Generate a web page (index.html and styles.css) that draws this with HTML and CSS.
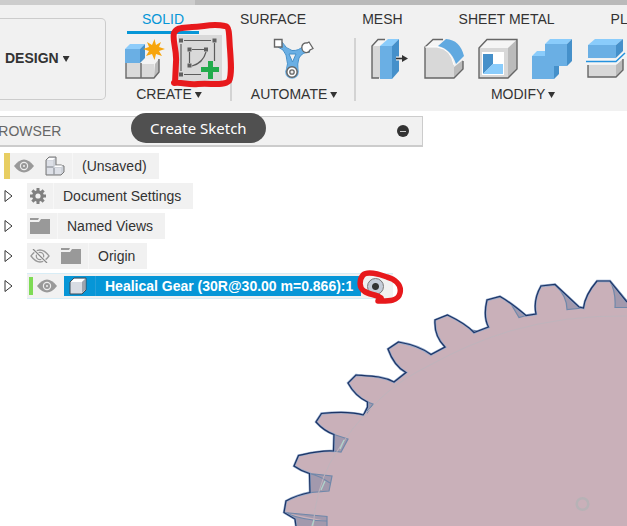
FILE: index.html
```html
<!DOCTYPE html>
<html lang="en">
<head>
<meta charset="utf-8">
<title>Design workspace</title>
<link rel="stylesheet" href="styles.css">
</head>
<body>
<div class="titlebar"><div class="titlebar-tab"></div></div>
<header class="toolbar">
  <button class="workspace" type="button">DESIGN <span class="caret"></span></button>
  <div class="ribbon">
    <nav class="tabs">
      <a class="tab active" href="#solid">SOLID</a>
      <a class="tab" href="#surface">SURFACE</a>
      <a class="tab" href="#mesh">MESH</a>
      <a class="tab" href="#sheet">SHEET METAL</a>
      <a class="tab" href="#plastic">PLASTIC</a>
    </nav>
    <div class="groups">
      <section class="group create">
        <div class="tools">
          <button class="tool" type="button" aria-label="New component">
            <svg width="41" height="42" viewBox="0 0 41 42">
              <path d="M1 25H16V40H1Z M16 25H29V40H16Z" fill="#dadada"/>
              <path d="M16 25L21 21H34L30 26H16Z" fill="#f4f4f4"/>
              <path d="M30 26L34 21V33L29 40Z" fill="#bbb"/>
              <path d="M1 25V40H29L34 34V21M16 25V40" fill="none" stroke="#696969" stroke-width="1.4"/>
              <path d="M0 11L5 6H20L15 11Z" fill="#8dccfa"/><path d="M0 11H15V25H0Z" fill="#6aafe4"/><path d="M15 11L20 6V20L15 25Z" fill="#4590ca"/>
              <path d="M29.500 1L31 7L36 4L34 9L40 11L34 13L37 18L31 16L29.500 22L27 16L21 18L24 13L18 11L24 9L22 4L27 7Z" fill="#f7a50c"/>
            </svg>
          </button>
          <div class="sketch-wrap">
            <button class="tool sketch" type="button" aria-label="Create Sketch">
              <svg width="44" height="46" viewBox="178 35 44 46">
                <g fill="none" stroke="#5c5c5c" stroke-width="1.2"><path d="M184 40.500H211M181 44V71M184 74.500H201M214.500 43V61M192 49.500H204M189.500 52V63M206 52Q203 63 192 66"/></g>
                <path d="M179 38.500h4v4h-4zM212.500 38.500h4v4h-4zM179 72.500h4v4h-4zM187.500 47.500h4v4h-4zM204 47.500h4v4h-4zM187.500 63.500h4v4h-4z" fill="#606060"/>
                <path d="M208 61h5v6h6v5h-6v7h-5v-7h-7v-5h7z" fill="#21ab4b"/>
              </svg>
            </button>
            <svg class="mark-sketch" width="66" height="70" viewBox="170 20 66 70">
              <path d="M174 83C183 82 187 85 198 84C211 83 224 86 229 81C232 75 231 62 230 49C229 39 230 26 225 26C211 23 204 27 192 27C182 28 177 27 174 33C172 40 177 50 176 62L175 83" fill="none" stroke="#e7191c" stroke-width="6" stroke-linejoin="round" stroke-linecap="round"/>
            </svg>
            <div class="tooltip" role="tooltip">Create Sketch</div>
          </div>
        </div>
        <button class="group-label" type="button">CREATE <span class="caret"></span></button>
      </section>
      <section class="group automate">
        <div class="tools">
          <button class="tool" type="button" aria-label="Automated modeling">
            <svg width="42" height="42" viewBox="272 38 42 42">
              <path d="M282 42Q286 49 292 50.500Q299 51 303 46L310 52Q302 52 299 58Q297 63 298 72H286Q289 64 286 55Q284 49 278 47Z" fill="#6aafe4" stroke="#4590ca"/>
              <path d="M289 54H296L292.500 62Z" fill="#f1f1f1" stroke="#4590ca"/>
              <circle cx="292" cy="72" r="6.800" fill="#6aafe4"/>
              <path d="M274.500 39.500H282V47H274.500Z" fill="#fff" stroke="#666" stroke-width="1.400"/>
              <path d="M302 46Q303 42.500 307 43L309 42L313 48.500L310 50Q309 53 305.500 52.500Q301 51 302 46Z" fill="#fff" stroke="#666" stroke-width="1.300"/>
              <circle cx="292" cy="72" r="5.200" fill="#fff" stroke="#666" stroke-width="1.500"/><circle cx="292" cy="72" r="2.200" fill="#eee" stroke="#666" stroke-width="1.300"/>
            </svg>
          </button>
        </div>
        <button class="group-label" type="button">AUTOMATE <span class="caret"></span></button>
      </section>
      <section class="group modify">
        <div class="tools">
          <button class="tool" type="button" aria-label="Press pull">
            <svg width="41" height="42" viewBox="370 38 41 42">
              <path d="M372 46H380V78H372Z" fill="#d8d8d8"/><path d="M372 46L378 40H386L379 46Z" fill="#f5f5f5"/><path d="M379 78H372V46L378 39.500H385" fill="none" stroke="#666" stroke-width="1.400"/>
              <path d="M380 46L388 39H399L392 46Z" fill="#8accfb"/><path d="M380 46H392V79H380Z" fill="#6aafe4"/><path d="M392 46L399 39V71L392 79Z" fill="#4590ca"/>
              <path d="M396 58.500H403" stroke="#f1f1f1" stroke-width="4"/><path d="M396 58.500H404" stroke="#333" stroke-width="1.600"/><path d="M402 55L408 58.500L402 62Z" fill="#333"/>
            </svg>
          </button>
          <button class="tool" type="button" aria-label="Fillet">
            <svg width="41" height="42" viewBox="424 38 41 42">
              <path d="M425 47L433 39.500H443L438 47Z" fill="#f5f5f5"/><path d="M425 47H437Q451 49 454 65V78H425Z" fill="#d8d8d8"/><path d="M454 67L463 60V69L454 78Z" fill="#bbb"/>
              <path d="M443 39.500H433L425 47V78H454L463 69V61" fill="none" stroke="#666" stroke-width="1.400"/><path d="M425 47H437Q451 49 454 65" fill="none" stroke="#fff"/>
              <path d="M438 46L446 39Q460 40 464 56L456 64Q451 49 438 46Z" fill="#60a9e0"/>
            </svg>
          </button>
          <button class="tool" type="button" aria-label="Shell">
            <svg width="41" height="42" viewBox="478 38 41 42">
              <path d="M479 48L487 39.500H517L508 48Z" fill="#f5f5f5"/><path d="M479 48H508V78H479Z" fill="#d8d8d8"/><path d="M508 48L517 39.500V69L508 78Z" fill="#bbb"/><path d="M479 48L487 39.500H517V69L508 78H479Z" fill="none" stroke="#666" stroke-width="1.400"/>
              <path d="M482 52H504V75H482Z" fill="#fff"/><path d="M483 54H493V64L483 74Z" fill="#4590ca"/><path d="M493 64H503V74H483Z" fill="#8accfb"/>
            </svg>
          </button>
          <button class="tool" type="button" aria-label="Combine">
            <svg width="41" height="42" viewBox="532 38 41 42">
              <path d="M532 56L537 51H545V44L550 39H572L567 44V66H554V79H532Z" fill="#8accfb"/><path d="M532 56H545V44H567V66H554V79H532Z" fill="#6aafe4"/><path d="M567 44L572 39V61L567 66ZM554 66H559V74L554 79Z" fill="#4590ca"/>
            </svg>
          </button>
          <button class="tool" type="button" aria-label="Split body">
            <svg width="41" height="42" viewBox="586 38 41 42">
              <path d="M588 45L595 39H623L616 45Z" fill="#8accfb"/><path d="M588 45H616V58H588Z" fill="#6aafe4"/><path d="M616 45L623 39V51L616 58Z" fill="#4590ca"/>
              <path d="M588 65H616V77H588Z" fill="#d8d8d8"/><path d="M616 65L623 59V70L616 77Z" fill="#bbb"/><path d="M588 65V77H616L623 70V59" fill="none" stroke="#666" stroke-width="1.400"/>
              <path d="M585 61.500H616L625 53" fill="none" stroke="#f5f5f5" stroke-width="5"/><path d="M585 61.500H616L625 53" fill="none" stroke="#2492df" stroke-width="1.500"/>
            </svg>
          </button>
        </div>
        <button class="group-label" type="button">MODIFY <span class="caret"></span></button>
      </section>
    </div>
  </div>
</header>
<main class="workspace-area">
  <svg class="gear" width="346" height="248" viewBox="281 278 346 248" aria-hidden="true">
    <defs>
      <path id="outline" d="M627 302L610 281H597Q585 295 583.500 308L579 307L555 284.500L541 286Q533 300 536 314L526 315.500C517 308 510 302 500 296.500L487 300Q483 317 488.500 327L474 332.500C467 325 458 320 447.500 315L435 320Q434 336 445 347L431 354.500C421 347 410 344 398.500 342L388 349Q394 366 406 372.500L394 382C383 376 370 376 356 375L348 383Q355 396 367.500 402V407L363.500 415C350 411 336 412 321.500 413.500L316 422Q324 431 334 434.500L333.500 451C321 450 310 453 298.500 455.500L294 466Q301 471 309.500 473.500L310 492.500Q297 495 286 501L284 512.500L295 519L296 526"/>
    </defs>
    <path d="M627 302L610 281H597Q585 295 583.500 308L579 307L555 284.500L541 286Q533 300 536 314L526 315.500C517 308 510 302 500 296.500L487 300Q483 317 488.500 327L474 332.500C467 325 458 320 447.500 315L435 320Q434 336 445 347L431 354.500C421 347 410 344 398.500 342L388 349Q394 366 406 372.500L394 382C383 376 370 376 356 375L348 383Q355 396 367.500 402V407L363.500 415C350 411 336 412 321.500 413.500L316 422Q324 431 334 434.500L333.500 451C321 450 310 453 298.500 455.500L294 466Q301 471 309.500 473.500L310 492.500Q297 495 286 501L284 512.500L295 519L296 526H627Z" fill="#c9b0b9"/>
    <g fill="#a299ad" stroke="#7088aa" stroke-width="1.200">
      <path d="M610 281Q616 292 615 307.500H628V302Z"/><path d="M555 284.500Q567 296 567 309.500L583 308L579 307Z"/><path d="M511 304L519 317.500L526 315.500ZM471 330L474 332.500L478 331Z"/>
      <path d="M367.500 402L373 404L367.500 412Z"/><path d="M334 434.500L348 439L341 452L333.500 451Z"/><path d="M309.500 473.500L332 476L329 491L310 492.500ZM309.500 473.500Q320 476 330 483"/><path d="M284 512.500L327 516.500V527H296L295 519ZM284 512.500Q305 521 327 521"/>
    </g>
    <use href="#outline" class="outline-halo"/>
    <use href="#outline" class="outline-core"/>
    <path d="M627 316Q565 315 510 331Q470 343 430 365Q400 380 382 397Q350 427 330 463Q316 490 313 526" fill="none" stroke="#bfb4bc" stroke-width="1"/>
    <path d="M344 440L340 449M325 481L321 490M314 520L312 526" stroke="#b0d5cc" stroke-width="1.300"/>
    <circle cx="582.500" cy="504" r="5.800" fill="none" stroke="#b7b2b6" stroke-width="2.500"/>
  </svg>
  <aside class="browser">
    <div class="browser-head"><h2>BROWSER</h2>
      <button class="collapse" type="button" aria-label="Collapse"></button>
    </div>
    <ul class="tree">
      <li class="root"><div class="chip">
        <span class="bar yellow"></span>
        <svg class="eye" width="20" height="14" viewBox="0 0 20 14"><path d="M0 7Q10-6 20 7Q10 20 0 7Z" fill="#999"/><circle cx="10" cy="7" r="4.200" fill="#eee"/><circle cx="10" cy="7" r="3" fill="#999"/><circle cx="10" cy="7" r="1" fill="#eee"/></svg>
        <svg class="assembly" width="20" height="20" viewBox="0 0 20 20"><path d="M1 4L4 1H11V9H16L19 10V16L16 19H1Z" fill="#cdd1d8" stroke="#777" stroke-width="1"/><path d="M2 4.500H8V10H2ZM2 12H8V18H2ZM10 12H16V18H10Z" fill="#dde0e7"/><path d="M1.500 11H8.500M9 12V18.500" fill="none" stroke="#8b8f96"/><path d="M2 4L4 2H10L8 4ZM9 11L11 9.500H18L16 11Z" fill="#fff"/></svg>
        <span class="divider"></span>
        <span class="name">(Unsaved)</span></div></li>
      <li><button class="twisty" type="button" aria-label="Expand Document Settings"><svg width="9" height="14" viewBox="0 0 9 14"><path d="M1 1.500V12.500L8 7Z" fill="#fff" stroke="#333"/></svg></button><div class="chip">
        <svg width="16" height="16" viewBox="-8 -8 16 16"><g fill="#808080"><path id="cog" d="M-1.500-8H1.500V8H-1.500ZM-8-1.500H8V1.500H-8Z"/><use href="#cog" transform="rotate(45)"/><circle r="5.800"/></g><circle r="2.600" fill="#f1f1f1"/></svg>
        <span class="divider"></span>
        <span class="name">Document Settings</span></div></li>
      <li><button class="twisty" type="button" aria-label="Expand Named Views"><svg width="9" height="14" viewBox="0 0 9 14"><path d="M1 1.500V12.500L8 7Z" fill="#fff" stroke="#333"/></svg></button><div class="chip">
        <svg width="20" height="16" viewBox="0 0 20 16"><path d="M0 0H9L8 2H0ZM0 4H9L11 1H20V16H0Z" fill="#999"/></svg>
        <span class="divider"></span>
        <span class="name">Named Views</span></div></li>
      <li><button class="twisty" type="button" aria-label="Expand Origin"><svg width="9" height="14" viewBox="0 0 9 14"><path d="M1 1.500V12.500L8 7Z" fill="#fff" stroke="#333"/></svg></button><div class="chip">
        <svg class="hidden-eye" width="20" height="14" viewBox="0 0 20 14"><path d="M1 7Q10-5 19 7Q10 19 1 7Z" fill="none" stroke="#999" stroke-width="1.300"/><circle cx="10" cy="7" r="3.700" fill="none" stroke="#999" stroke-width="1.300"/><path d="M3 0L17 14" stroke="#f1f1f1" stroke-width="3"/><path d="M3 0L17 14" stroke="#888" stroke-width="1.200"/></svg>
        <svg width="20" height="16" viewBox="0 0 20 16"><path d="M0 0H9L8 2H0ZM0 4H9L11 1H20V16H0Z" fill="#999"/></svg>
        <span class="divider"></span>
        <span class="name">Origin</span></div></li>
      <li><button class="twisty" type="button" aria-label="Expand Healical Gear"><svg width="9" height="14" viewBox="0 0 9 14"><path d="M1 1.500V12.500L8 7Z" fill="#fff" stroke="#333"/></svg></button><div class="chip component">
        <span class="bar green"></span>
        <svg class="eye" width="20" height="14" viewBox="0 0 20 14"><path d="M0 7Q10-6 20 7Q10 20 0 7Z" fill="#999"/><circle cx="10" cy="7" r="4.200" fill="#eee"/><circle cx="10" cy="7" r="3" fill="#999"/><circle cx="10" cy="7" r="1" fill="#eee"/></svg>
        <div class="selected"><svg width="18" height="18" viewBox="0 0 18 18"><path d="M1 5L5 1H17V13L13 17H1Z" fill="#d8dce3" stroke="#3d4d5a" stroke-width="1"/><path d="M2 5L5 2H16L13 5Z" fill="#fff"/><path d="M13 5L16 2V13L13 16Z" fill="#9ea4ae"/></svg><span class="divider"></span><span class="name">Healical Gear (30R@30.00 m=0.866):1</span></div>
        <label class="activate"><input type="radio" name="active" checked aria-label="Activate component"></label>
        <svg class="mark-radio" width="50" height="38" viewBox="355 267 50 38"><path d="M378 301C387 301 398 302 400 293C402 284 394 279 387 277C379 274 367 271 363 275C359 280 359 288 364 291C369 295 376 294 381 298" fill="none" stroke="#e7191c" stroke-width="5.500" stroke-linecap="round" stroke-linejoin="round"/></svg>
      </div></li>
    </ul>
  </aside>
</main>
</body>
</html>
```
FILE: styles.css
```css
* { box-sizing: border-box; }
body {
  margin: 0;
  min-height: 100vh;
  display: flex;
  flex-direction: column;
  overflow: hidden;
  background: #fff;
  color: #333;
  font: 14px/18px "Liberation Sans", Arial, sans-serif;
}
button { font: inherit; color: inherit; background: none; border: 0; padding: 0; }
svg { display: block; flex: none; }
.titlebar { height: 5px; background: #bababa; }
.titlebar-tab { width: 195px; height: 5px; background: #cdcdcd; }
.toolbar { display: flex; height: 106px; background: #f1f1f1; }
.workspace {
  flex: none;
  width: 106px;
  margin: 13px 0 11px;
  padding: 0 0 2px 5px;
  border: 1px solid #ccc;
  border-left: 0;
  border-radius: 0 5px 5px 0;
  text-align: left;
  font-weight: bold;
}
.caret {
  display: inline-block;
  width: 7px;
  height: 6px;
  vertical-align: 1px;
  background: #333;
  clip-path: polygon(0 0, 100% 0, 50% 100%);
}
.group-label .caret { margin-left: -1px; }
.ribbon { flex: 1; min-width: 0; }
.tabs { display: flex; gap: 26px; padding-left: 21px; overflow: hidden; }
.tab {
  flex: none;
  height: 29px;
  padding: 5px 15px 0;
  color: #333;
  text-decoration: none;
}
.tab.active { color: #0696d7; border-bottom: 3px solid #0696d7; }
.groups { display: flex; }
.group {
  flex: none;
  height: 63px;
  margin-top: 4px;
  border-right: 2px solid #d3d3d3;
}
.create { width: 126px; }
.automate { width: 124px; }
.modify { width: 334px; }
.tools { display: flex; height: 42px; }
.tool { display: block; flex: none; }
.create .tools { padding-left: 19px; gap: 12px; }
.automate .tools { justify-content: center; }
.modify .tools { padding-left: 14px; gap: 13px; }
.sketch-wrap { position: relative; margin-top: -3px; }
.sketch { background: #d9d9d9; }
.mark-sketch { position: absolute; left: -8px; top: -15px; }
.tooltip {
  position: absolute;
  z-index: 5;
  left: -47px;
  top: 78px;
  padding: 0 19px;
  border-radius: 15px;
  background: #505050;
  color: #fff;
  font: 15px/30px "Noto Sans", "Open Sans", sans-serif;
  white-space: nowrap;
}
.group-label { display: block; width: 100%; margin-top: 5px; padding-left: 2px; text-align: center; }
.workspace-area { position: relative; flex: 1; padding-top: 5px; }
.gear { position: absolute; right: 0; bottom: 0; }
.outline-halo { fill: none; stroke: #8da5c9; stroke-width: 2.4; }
.outline-core { fill: none; stroke: #1d3465; stroke-width: 1.2; }
.browser { position: relative; }
.browser-head {
  display: flex;
  justify-content: space-between;
  align-items: center;
  width: 423px;
  height: 31px;
  padding-right: 13px;
  background: #f1f1f1;
  border: 1px solid #ccc;
  border-width: 1px 1px 2px 0;
}
h2 { margin: 0 0 0 -11px; font-size: 14px; font-weight: normal; color: #666; }
.collapse { width: 12px; height: 12px; padding: 0 3px; border-radius: 50%; background: #333; }
.collapse::before { content: ""; display: block; height: 1px; background: #ccc; }
.tree {
  display: grid;
  gap: 4px;
  margin: 0;
  padding: 6px 0 0 4px;
  list-style: none;
}
.tree li { display: flex; align-items: center; height: 26px; }
.twisty { width: 23px; }
.chip {
  position: relative;
  display: flex;
  align-items: center;
  height: 26px;
  padding: 0 12px 0 3px;
  background: #f1f1f1;
}
.root .chip { padding-left: 0; }
.bar { align-self: stretch; }
.yellow { width: 6px; margin-right: 4px; background: #e8ce62; }
.green { width: 4px; margin: 3px 4px 3px 0; background: #7edb55; }
.assembly { margin-left: 11px; }
.divider { align-self: stretch; width: 1px; margin-left: 7px; background: #f7f7f7; }
.name { margin-left: 9px; white-space: nowrap; }
.hidden-eye { margin-right: 11px; }
.component {
  padding: 0 0 0 2px;
  border: solid #d8edf6;
  border-width: 1px 0;
}
.selected {
  display: flex;
  align-items: center;
  height: 20px;
  margin-left: 7px;
  padding: 0 8px 0 5px;
  background: #0696d7;
  color: #fff;
  font-weight: bold;
}
.selected .divider { margin-left: 8px; background: #269fd9; }
.activate { display: flex; width: 32px; padding-left: 6px; }
.activate input {
  appearance: none;
  width: 17px;
  height: 17px;
  margin: 0;
  border: 1px solid #777;
  border-radius: 50%;
  background: radial-gradient(circle, #333 0 3px, #c5ccd8 4px);
}
.mark-radio { position: absolute; right: -12px; top: -7px; }
```
